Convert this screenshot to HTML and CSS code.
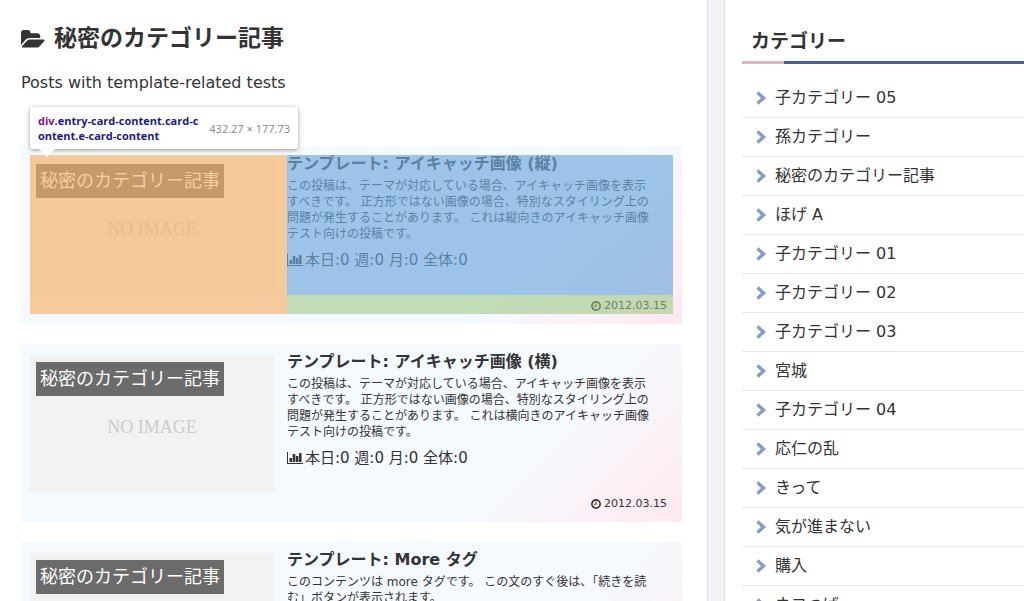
FILE: index.html
```html
<!DOCTYPE html>
<html lang="ja">
<head>
<meta charset="utf-8">
<title>秘密のカテゴリー記事</title>
<link rel="stylesheet" href="styles.css">
</head>
<body>
<svg class="sprite" aria-hidden="true">
  <symbol id="folder" viewBox="0 0 1920 1536"><path d="M1879 952q0 31-31 66l-336 396q-43 51-120.500 86.500T1248 1536H160q-34 0-60.500-13T73 1480q0-31 31-66l336-396q43-51 120.500-86.500T704 896h1088q34 0 60.500 13t26.500 43zM1536 608v160H704q-94 0-197 47.500T343 935L6 1331l-5 6q0-4-.5-12.500T0 1312V352q0-92 66-158t158-66h320q92 0 158 66t66 158v32h544q92 0 158 66t66 158z"/></symbol>
  <symbol id="chart" viewBox="0 0 2048 1536"><path d="M2048 1408v128H0V0h128v1408zM640 768v512H320V768zm420-512v1024H730V256zm400 256v768h-320V512zm400-384v1152h-320V128z"/></symbol>
  <symbol id="clock" viewBox="0 0 16 16"><circle cx="8" cy="8" r="6.600" fill="none" stroke="currentColor" stroke-width="2.600"/><path d="M8 4v4.500H5" fill="none" stroke="currentColor" stroke-width="1.600"/></symbol>
  <symbol id="chevron" viewBox="0 0 10 14"><path d="M1.500 1.500 7.500 7 1.500 12.500" fill="none" stroke="currentColor" stroke-width="3.400"/></symbol>
</svg>
<div class="layout">
  <main class="main">
    <h1 class="archive-title"><svg class="folder-icon"><use href="#folder"/></svg>秘密のカテゴリー記事</h1>
    <p class="archive-note">Posts with template-related tests</p>
    <div class="entry-list">
      <article class="entry-card">
        <figure class="thumb"><span class="cat-label">秘密のカテゴリー記事</span><span class="no-image">NO IMAGE</span></figure>
        <div class="entry-content">
          <h2 class="entry-title">テンプレート: アイキャッチ画像 (縦)</h2>
          <p class="snippet">この投稿は、テーマが対応している場合、アイキャッチ画像を表示すべきです。 正方形ではない画像の場合、特別なスタイリング上の問題が発生することがあります。 これは縦向きのアイキャッチ画像テスト向けの投稿です。</p>
          <p class="views"><svg class="chart-icon"><use href="#chart"/></svg>本日:0 週:0 月:0 全体:0</p>
          <p class="date"><svg class="clock-icon"><use href="#clock"/></svg><time>2012.03.15</time></p>
        </div>
        <div class="inspect"><div class="inspect-margin"></div><div class="inspect-content"></div><div class="inspect-padding"></div></div>
        <div class="tip"><p class="tip-name"><span class="tip-tag">div</span>.entry-card-content.card-content.e-card-content</p><span class="tip-size">432.27 × 177.73</span></div>
      </article>
      <article class="entry-card">
        <figure class="thumb"><span class="cat-label">秘密のカテゴリー記事</span><span class="no-image">NO IMAGE</span></figure>
        <div class="entry-content">
          <h2 class="entry-title">テンプレート: アイキャッチ画像 (横)</h2>
          <p class="snippet">この投稿は、テーマが対応している場合、アイキャッチ画像を表示すべきです。 正方形ではない画像の場合、特別なスタイリング上の問題が発生することがあります。 これは横向きのアイキャッチ画像テスト向けの投稿です。</p>
          <p class="views"><svg class="chart-icon"><use href="#chart"/></svg>本日:0 週:0 月:0 全体:0</p>
          <p class="date"><svg class="clock-icon"><use href="#clock"/></svg><time>2012.03.15</time></p>
        </div>
      </article>
      <article class="entry-card">
        <figure class="thumb"><span class="cat-label">秘密のカテゴリー記事</span></figure>
        <div class="entry-content">
          <h2 class="entry-title">テンプレート: More タグ</h2>
          <p class="snippet">このコンテンツは more タグです。 この文のすぐ後は、「続きを読む」ボタンが表示されます。</p>
        </div>
      </article>
    </div>
  </main>
  <aside class="sidebar">
    <h3 class="widget-title">カテゴリー</h3>
    <ul class="categories">
      <li><a href="#"><svg class="chevron"><use href="#chevron"/></svg>子カテゴリー 05</a></li>
      <li><a href="#"><svg class="chevron"><use href="#chevron"/></svg>孫カテゴリー</a></li>
      <li><a href="#"><svg class="chevron"><use href="#chevron"/></svg>秘密のカテゴリー記事</a></li>
      <li><a href="#"><svg class="chevron"><use href="#chevron"/></svg>ほげ A</a></li>
      <li><a href="#"><svg class="chevron"><use href="#chevron"/></svg>子カテゴリー 01</a></li>
      <li><a href="#"><svg class="chevron"><use href="#chevron"/></svg>子カテゴリー 02</a></li>
      <li><a href="#"><svg class="chevron"><use href="#chevron"/></svg>子カテゴリー 03</a></li>
      <li><a href="#"><svg class="chevron"><use href="#chevron"/></svg>宮城</a></li>
      <li><a href="#"><svg class="chevron"><use href="#chevron"/></svg>子カテゴリー 04</a></li>
      <li><a href="#"><svg class="chevron"><use href="#chevron"/></svg>応仁の乱</a></li>
      <li><a href="#"><svg class="chevron"><use href="#chevron"/></svg>きって</a></li>
      <li><a href="#"><svg class="chevron"><use href="#chevron"/></svg>気が進まない</a></li>
      <li><a href="#"><svg class="chevron"><use href="#chevron"/></svg>購入</a></li>
      <li><a href="#"><svg class="chevron"><use href="#chevron"/></svg>ネコつば</a></li>
    </ul>
  </aside>
</div>
</body>
</html>
```
FILE: styles.css
```css
* { box-sizing: border-box; margin: 0; padding: 0; }
body {
  height: 100vh;
  overflow: hidden;
  background: #f1f3f6;
  color: #333;
  font: 16px/24px "DejaVu Sans", "Noto Sans CJK JP", sans-serif;
}
svg { fill: currentColor; flex: none; }
.sprite { position: absolute; width: 0; height: 0; }
.layout { display: grid; grid-template-columns: minmax(0, 1fr) 300px; gap: 16px; min-height: 100vh; }
.main { background: #fff; border-right: 1px solid #dcdfe3; padding: 21px 25px 20px 21px; }
.archive-title { display: flex; align-items: center; gap: 9px; font-size: 23px; line-height: 34px; }
.folder-icon { width: 24px; height: 20px; }
.archive-note { margin-top: 16px; }
.entry-list { display: grid; gap: 20px; margin-top: 51px; }
.entry-card {
  position: relative;
  display: flex;
  gap: 13px;
  min-height: 178px;
  padding: 9px;
  background: linear-gradient(135deg, #f5faff 0%, #f5faff 74%, #ffe9ef 100%);
}
.thumb {
  display: flex;
  align-items: center;
  justify-content: center;
  position: relative;
  width: 244px;
  height: 137px;
  margin-top: 2px;
  background: #f2f2f2;
}
.cat-label {
  position: absolute;
  top: 7px;
  left: 6px;
  padding: 4px;
  background: #6b6b6b;
  color: #fff;
  font-size: 18px;
  line-height: 26px;
}
.no-image { color: #ccc; font: 18px/24px "Liberation Serif", serif; padding-top: 6px; }
.entry-content { display: flex; flex-direction: column; flex: 1; min-width: 0; }
.entry-title { font-size: 16px; line-height: 18px; }
.snippet { margin-top: 5px; padding-right: 16px; font-size: 12px; line-height: 16px; }
.views { display: flex; align-items: center; gap: 2px; margin-top: 8px; font-size: 15px; line-height: 20px; }
.chart-icon { width: 16px; height: 12px; }
.date { display: flex; align-items: center; justify-content: flex-end; gap: 3px; margin-top: auto; padding-right: 6px; font-size: 11px; line-height: 18px; }
.clock-icon { width: 10px; height: 10px; }
.inspect {
  position: absolute;
  inset: 9px 9px 10px;
  display: grid;
  grid-template: 1fr 19px / 257px 1fr;
}
.inspect-margin { grid-row: span 2; background: rgba(246, 178, 107, .66); }
.inspect-content { background: rgba(111, 168, 220, .66); }
.inspect-padding { background: rgba(147, 196, 125, .55); }
.tip {
  position: absolute;
  bottom: 175px;
  left: 9px;
  display: flex;
  align-items: center;
  gap: 8px;
  width: 268px;
  padding: 6px 8px;
  border-radius: 2px;
  background: #fff;
  box-shadow: 0 1px 4px rgba(0, 0, 0, .4);
  font: 11px/15px "Open Sans", sans-serif;
}
.tip::after {
  content: "";
  position: absolute;
  top: 100%;
  left: 9px;
  border: 8px solid transparent;
  border-top-color: #fff;
  border-bottom: 0;
}
.tip-name { flex: 1; color: #1a1a84; font-weight: 700; word-break: break-all; }
.tip-tag { color: #881280; }
.tip-size { color: #888; white-space: nowrap; }
.sidebar { background: #fff; border-left: 1px solid #dcdfe3; padding: 21px 0 0 17px; }
.widget-title {
  padding: 8px 9px;
  border-bottom: 3px solid;
  border-image: linear-gradient(90deg, #dfb3c4 43px, #44639a 43px) 1;
  font-size: 19px;
  line-height: 24px;
}
.categories { margin-top: 15px; list-style: none; }
.categories li { border-bottom: 1px solid #e5e5e5; }
.categories a { display: flex; align-items: center; gap: 9px; padding: 7px 14px; color: #333; text-decoration: none; }
.chevron { width: 10px; height: 14px; color: #859dc4; }
```
